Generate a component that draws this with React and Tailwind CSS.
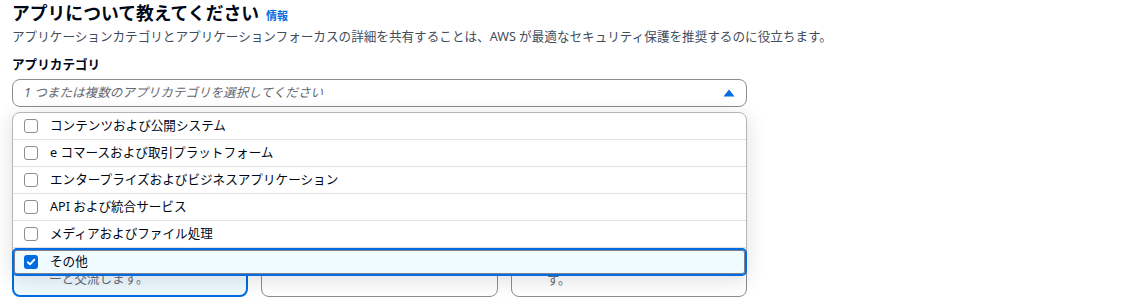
import React from 'react';

const FONT = { fontFamily: '"Noto Sans", "Noto Sans CJK JP", sans-serif' };

const OPTIONS = [
  { label: 'コンテンツおよび公開システム', checked: false },
  { label: 'e コマースおよび取引プラットフォーム', checked: false },
  { label: 'エンタープライズおよびビジネスアプリケーション', checked: false },
  { label: 'API および統合サービス', checked: false },
  { label: 'メディアおよびファイル処理', checked: false },
  { label: 'その他', checked: true },
];

const Checkbox = ({ checked }) =>
  checked ? (
    <span className="flex h-[14px] w-[14px] shrink-0 items-center justify-center rounded-[3px] bg-[#006ce0]">
      <svg width="10" height="10" viewBox="0 0 10 10" fill="none">
        <path d="M1.8 5.2 L4 7.3 L8.3 2.6" stroke="#fff" strokeWidth="1.9" strokeLinecap="round" strokeLinejoin="round" />
      </svg>
    </span>
  ) : (
    <span className="h-[14px] w-[14px] shrink-0 rounded-[3px] border border-[#8c8c94] bg-white" />
  );

// tiles behind the open dropdown: only the last line of each peeks out
const Card = ({ selected, text }) => (
  <div
    className={
      'flex h-[170px] flex-col justify-end rounded-[8px] px-[14px] pb-[7px] ' +
      (selected ? 'border-2 border-[#006ce0] bg-[#f0fbff]' : 'border border-[#8c8c94] bg-white')
    }
  >
    <div className="h-[18px] pl-[21px] text-[12.6px] leading-[18px] text-[#5f6b7a]">{text}</div>
  </div>
);

export default function App() {
  return (
    <div className="min-h-[305px] bg-white px-[12px] text-[#000716]" style={FONT}>
      <div className="flex h-[26px] items-baseline">
        <h2 className="text-[17.8px] font-bold leading-[26px]">アプリについて教えてください</h2>
        <span className="ml-[7px] text-[11px] font-bold text-[#006ce0]">情報</span>
      </div>
      <p className="mt-[1px] text-[12.6px] leading-[20px] text-[#414d5c]">
        アプリケーションカテゴリとアプリケーションフォーカスの詳細を共有することは、AWS が最適なセキュリティ保護を推奨するのに役立ちます。
      </p>

      <div className="w-[735px]">
        <div className="mt-[8px] text-[12.6px] font-bold leading-[20px]">アプリカテゴリ</div>
        <div className="mt-[4px] flex h-[28px] items-center justify-between rounded-[8px] border border-[#8c8c94] bg-white pl-[11px] pr-[11px]">
          <span className="text-[12.6px] italic text-[#656871]">1 つまたは複数のアプリカテゴリを選択してください</span>
          <svg width="12" height="8" viewBox="0 0 12 8">
            <path d="M6 0.5 L11.5 7.5 L0.5 7.5 Z" fill="#006ce0" />
          </svg>
        </div>

        <div className="relative">
          <div className="grid grid-cols-3 gap-[13px] pt-[20px]">
            <Card selected text="ーと交流します。" />
            <Card text="" />
            <Card text="す。" />
          </div>

          <div className="absolute left-0 right-0 top-[5px] rounded-[8px] border border-[#b4b4bb] bg-white shadow-[0_4px_20px_1px_rgba(0,7,22,0.12)]">
            {OPTIONS.map((o, i) =>
              o.checked ? (
                <div
                  key={i}
                  className="-mx-px -mb-px flex h-[28px] items-center gap-[12px] rounded-[5px] border-2 border-[#006ce0] bg-[#f0fbff] pl-[10px] shadow-[inset_0_0_0_1px_#7d8190]"
                >
                  <Checkbox checked />
                  <span className="text-[12.6px]">{o.label}</span>
                </div>
              ) : (
                <div key={i} className="flex h-[27px] items-center gap-[12px] border-b border-[#e0e0e6] pl-[11px]">
                  <Checkbox />
                  <span className="text-[12.6px]">{o.label}</span>
                </div>
              )
            )}
          </div>
        </div>
      </div>
    </div>
  );
}
